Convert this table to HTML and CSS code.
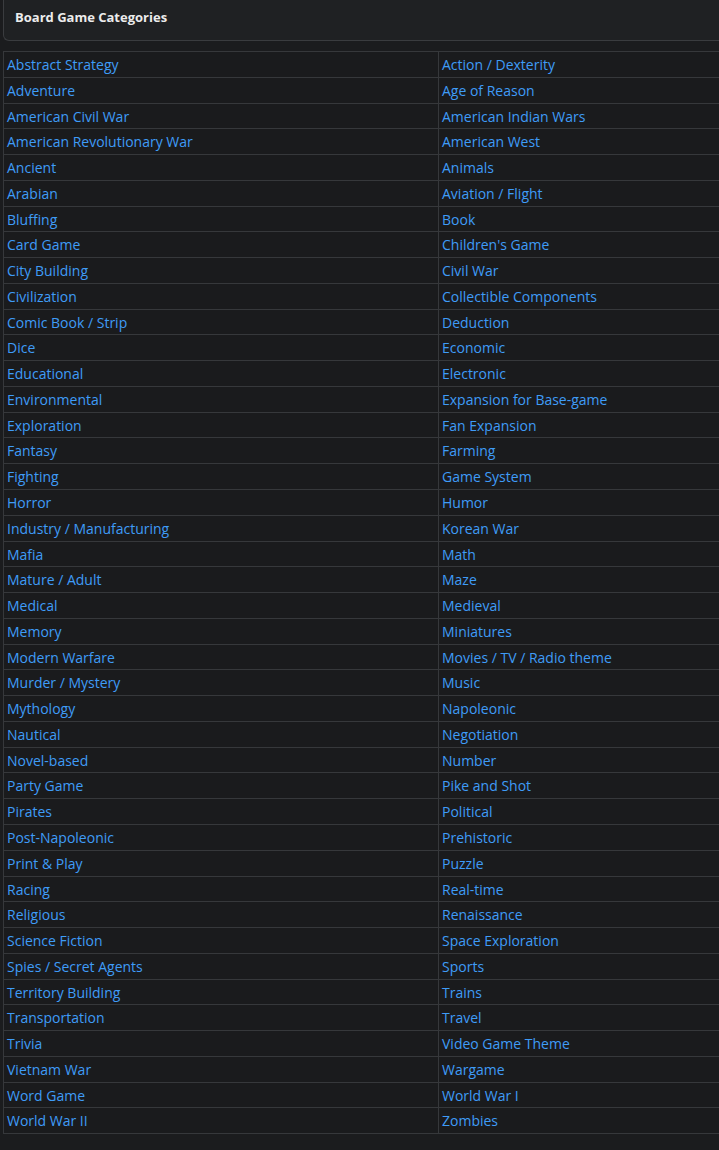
FILE: index.html
```html
<!DOCTYPE html>
<html lang="en">
<head>
    <meta charset="UTF-8" />
    <meta name="viewport" content="width=device-width, initial-scale=1.0"/>
    <title>Board Game Categories</title>
    <link rel="stylesheet" href="styles.css">
</head>
<body>
    <div class="panel-header">
        <h3 class="panel-title">Board Game Categories</h3>
    </div>

    <table class="category-table">
        <tbody>
            <tr><td><a href="#">Abstract Strategy</a></td><td><a href="#">Action / Dexterity</a></td></tr>
            <tr><td><a href="#">Adventure</a></td><td><a href="#">Age of Reason</a></td></tr>
            <tr><td><a href="#">American Civil War</a></td><td><a href="#">American Indian Wars</a></td></tr>
            <tr><td><a href="#">American Revolutionary War</a></td><td><a href="#">American West</a></td></tr>
            <tr><td><a href="#">Ancient</a></td><td><a href="#">Animals</a></td></tr>
            <tr><td><a href="#">Arabian</a></td><td><a href="#">Aviation / Flight</a></td></tr>
            <tr><td><a href="#">Bluffing</a></td><td><a href="#">Book</a></td></tr>
            <tr><td><a href="#">Card Game</a></td><td><a href="#">Children's Game</a></td></tr>
            <tr><td><a href="#">City Building</a></td><td><a href="#">Civil War</a></td></tr>
            <tr><td><a href="#">Civilization</a></td><td><a href="#">Collectible Components</a></td></tr>
            <tr><td><a href="#">Comic Book / Strip</a></td><td><a href="#">Deduction</a></td></tr>
            <tr><td><a href="#">Dice</a></td><td><a href="#">Economic</a></td></tr>
            <tr><td><a href="#">Educational</a></td><td><a href="#">Electronic</a></td></tr>
            <tr><td><a href="#">Environmental</a></td><td><a href="#">Expansion for Base-game</a></td></tr>
            <tr><td><a href="#">Exploration</a></td><td><a href="#">Fan Expansion</a></td></tr>
            <tr><td><a href="#">Fantasy</a></td><td><a href="#">Farming</a></td></tr>
            <tr><td><a href="#">Fighting</a></td><td><a href="#">Game System</a></td></tr>
            <tr><td><a href="#">Horror</a></td><td><a href="#">Humor</a></td></tr>
            <tr><td><a href="#">Industry / Manufacturing</a></td><td><a href="#">Korean War</a></td></tr>
            <tr><td><a href="#">Mafia</a></td><td><a href="#">Math</a></td></tr>
            <tr><td><a href="#">Mature / Adult</a></td><td><a href="#">Maze</a></td></tr>
            <tr><td><a href="#">Medical</a></td><td><a href="#">Medieval</a></td></tr>
            <tr><td><a href="#">Memory</a></td><td><a href="#">Miniatures</a></td></tr>
            <tr><td><a href="#">Modern Warfare</a></td><td><a href="#">Movies / TV / Radio theme</a></td></tr>
            <tr><td><a href="#">Murder / Mystery</a></td><td><a href="#">Music</a></td></tr>
            <tr><td><a href="#">Mythology</a></td><td><a href="#">Napoleonic</a></td></tr>
            <tr><td><a href="#">Nautical</a></td><td><a href="#">Negotiation</a></td></tr>
            <tr><td><a href="#">Novel-based</a></td><td><a href="#">Number</a></td></tr>
            <tr><td><a href="#">Party Game</a></td><td><a href="#">Pike and Shot</a></td></tr>
            <tr><td><a href="#">Pirates</a></td><td><a href="#">Political</a></td></tr>
            <tr><td><a href="#">Post-Napoleonic</a></td><td><a href="#">Prehistoric</a></td></tr>
            <tr><td><a href="#">Print &amp; Play</a></td><td><a href="#">Puzzle</a></td></tr>
            <tr><td><a href="#">Racing</a></td><td><a href="#">Real-time</a></td></tr>
            <tr><td><a href="#">Religious</a></td><td><a href="#">Renaissance</a></td></tr>
            <tr><td><a href="#">Science Fiction</a></td><td><a href="#">Space Exploration</a></td></tr>
            <tr><td><a href="#">Spies / Secret Agents</a></td><td><a href="#">Sports</a></td></tr>
            <tr><td><a href="#">Territory Building</a></td><td><a href="#">Trains</a></td></tr>
            <tr><td><a href="#">Transportation</a></td><td><a href="#">Travel</a></td></tr>
            <tr><td><a href="#">Trivia</a></td><td><a href="#">Video Game Theme</a></td></tr>
            <tr><td><a href="#">Vietnam War</a></td><td><a href="#">Wargame</a></td></tr>
            <tr><td><a href="#">Word Game</a></td><td><a href="#">World War I</a></td></tr>
            <tr><td><a href="#">World War II</a></td><td><a href="#">Zombies</a></td></tr>
        </tbody>
    </table>
</body>
</html>
```

FILE: styles.css
```css
body {
    margin: 0;
    background-color: #1b1c1e;
    font-family: "Open Sans", Arial, sans-serif;
}

.panel-header {
    margin: -11px 0 0 3px;
    padding: 18px 11px 14px;
    background-color: #1f2123;
    border: 1px solid #3a3c3f;
    border-right: none;
    border-radius: 6px 0 0 6px;
}

.panel-title {
    margin: 0;
    font-size: 13px;
    font-weight: bold;
    line-height: 18px;
    color: #ececec;
}

.category-table {
    margin: 10px 0 0 3px;
    width: calc(100% - 3px);
    border-collapse: collapse;
    table-layout: fixed;
    background-color: #1a1b1d;
}

.category-table td {
    border: 1px solid #36383b;
    padding: 4px 3px 2px;
    line-height: 18.76px;
    font-size: 14px;
    white-space: nowrap;
}

.category-table td:first-child {
    width: 428px;
}

.category-table td:last-child {
    border-right: none;
}

.category-table a {
    color: #3f9cf7;
    font-weight: 500;
    text-decoration: none;
}
```
